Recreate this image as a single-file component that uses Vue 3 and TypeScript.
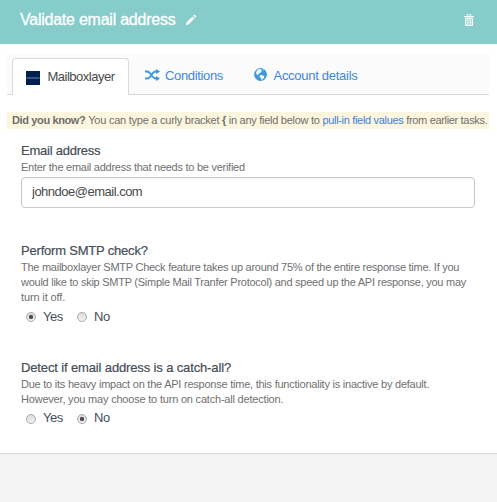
<script setup lang="ts">
import { ref } from 'vue'

interface Question {
  id: string
  label: string
  lines: { text: string; cls: string }[]
  answer: string
}

const email = ref('johndoe@email.com')
const options = ['Yes', 'No']
const questions = ref<Question[]>([
  {
    id: 'smtp',
    label: 'Perform SMTP check?',
    lines: [
      { text: 'The mailboxlayer SMTP Check feature takes up around 75% of the entire response time. If you', cls: 'normal' },
      { text: 'would like to skip SMTP (Simple Mail Tranfer Protocol) and speed up the API response, you may', cls: 'normal' },
      { text: 'turn it off.', cls: 'short' },
    ],
    answer: 'Yes',
  },
  {
    id: 'catchall',
    label: 'Detect if email address is a catch-all?',
    lines: [
      { text: 'Due to its heavy impact on the API response time, this functionality is inactive by default.', cls: 'medium' },
      { text: 'However, you may choose to turn on catch-all detection.', cls: 'loose' },
    ],
    answer: 'No',
  },
])
</script>

<template>
  <div class="panel">
    <header class="header">
      <h1 class="title">Validate email address</h1>
      <svg class="pencil" viewBox="0 0 12 12" width="12" height="12">
        <path d="M.8 11.200l.8-3L7.600 2.500l1.900 1.900L3.800 10.200zM8.300 1.800l.9-.9q.4-.4.8 0l1.100 1.100q.4.400 0 .8l-.9.900z" fill="#fff" />
      </svg>
      <svg class="trash" viewBox="0 0 10 12" width="10" height="12">
        <path d="M3.200 2V.6h3.600V2" fill="none" stroke="#fff" stroke-opacity=".8" />
        <path d="M0 2h10v1H0z" fill="#fff" />
        <path d="M1.500 4v7.500h7V4z" fill="#fff" fill-opacity=".35" stroke="#fff" />
        <path d="M3.500 4.500V11M5 4.500V11M6.500 4.500V11" stroke="#fff" stroke-opacity=".65" stroke-width=".7" />
      </svg>
    </header>

    <main class="body">
      <nav class="tabs">
        <a class="tab active">
          <span class="brand"><svg viewBox="0 0 14 14" width="14" height="14"><path d="M.5 7h13" stroke="#8492b3" stroke-width="1.200" stroke-dasharray="1.800 .2" /></svg></span>
          <span class="name mailbox">Mailboxlayer</span>
        </a>
        <a class="tab conditions">
          <svg class="icon" viewBox="0 0 15 12" width="15" height="12">
            <path d="M0 2.500h2.300C5.800 2.500 7 9.500 10.500 9.500H12M0 9.500h2.300C5.800 9.500 7 2.500 10.500 2.500H12" fill="none" stroke="#3b99e0" stroke-width="1.800" />
            <path d="M11 0l4 2.500L11 5zM11 7l4 2.500L11 12z" fill="#3b99e0" />
          </svg>
          <span class="name cond">Conditions</span>
        </a>
        <a class="tab account">
          <svg class="icon" viewBox="0 0 13 13" width="13" height="13">
            <circle cx="6.500" cy="6.500" r="6.400" fill="#3b99e0" />
            <path d="M3 2.200L5.200 1l2.300.3-.8 1.200 1.200.4-.8 1.500-1.500.4-.5 1.300-1.300.2.7 1.200-1.600-.7-.9-1.900zM8.500 1.200l1.300.6-.5.800-1-.3zM6 7.300l1.500-.3 2.900 1.300-.5 1.700-1.500 1.500-1.200.2-.2-1.700L5.600 9z" fill="#f5fafd" />
          </svg>
          <span class="name acct">Account details</span>
        </a>
      </nav>

      <p class="hint"><b>Did you know?</b> <span class="h1">You can type a curly bracket</span> <b class="brace">{</b> <span class="h2">in any field below to</span> <a>pull-in field values</a> <span class="h3">from earlier tasks.</span></p>

      <section class="field email">
        <label class="label" for="email">Email address</label>
        <p class="desc">Enter the email address that needs to be verified</p>
        <input id="email" v-model="email" class="input" type="text">
      </section>

      <section v-for="q in questions" :key="q.id" class="field" :class="q.id">
        <h2 class="label">{{ q.label }}</h2>
        <p v-for="line in q.lines" :key="line.text" class="desc" :class="line.cls">{{ line.text }}</p>
        <div class="options">
          <label v-for="o in options" :key="o" class="option">
            <input v-model="q.answer" class="radio" type="radio" :name="q.id" :value="o">
            <span>{{ o }}</span>
          </label>
        </div>
      </section>
    </main>
    <footer class="footer"></footer>
  </div>
</template>

<style>
body {
  background: #fff;
}
</style>

<style scoped>
.panel {
  display: flex;
  flex-direction: column;
  width: 497px;
  height: 502px;
  overflow: hidden;
  box-sizing: border-box;
  font-family: "Liberation Sans", Arial, sans-serif;
  color: #444b54;
}
h1, h2, p {
  margin: 0;
  font-weight: 400;
}
.header {
  display: flex;
  align-items: center;
  flex: none;
  height: 44px;
  padding: 0 23px 0 20px;
  box-sizing: border-box;
  background: #86cccb;
}
.title {
  font-size: 16px;
  line-height: 20px;
  letter-spacing: -0.24px;
  color: #fff;
  -webkit-text-stroke: 0.3px #fff;
  padding-bottom: 4px;
}
.pencil {
  margin: 0 0 4px 10px;
}
.trash {
  margin: 0 0 5px auto;
}
.body {
  flex: none;
  height: 409px;
  padding: 9px 8px 0 7px;
  box-sizing: border-box;
}
.tabs {
  display: flex;
  align-items: flex-end;
  height: 42px;
  padding-left: 5px;
  box-sizing: border-box;
  background: #fbfbfb;
  border-bottom: 1px solid #d9d9d9;
}
.tab {
  display: flex;
  align-items: center;
  height: 36px;
  box-sizing: border-box;
  font-size: 13px;
  color: #3f87dc;
}
.tab.active {
  width: 117px;
  height: 37px;
  margin-bottom: -1px;
  padding-left: 13px;
  border: 1px solid #d9d9d9;
  border-bottom: 0;
  border-radius: 4px 4px 0 0;
  background: #fff;
  color: #4a4a4a;
}
.name {
  line-height: 18px;
  white-space: nowrap;
}
.brand {
  display: flex;
  width: 14px;
  height: 14px;
  margin: 1px 7.500px 0 0;
  background: #001f4f;
}
.mailbox { letter-spacing: -0.498px; }
.cond { letter-spacing: -0.343px; }
.acct { letter-spacing: -0.278px; }
.conditions {
  margin-left: 16px;
}
.conditions .icon {
  margin: 0 5px 3px 0;
}
.account {
  margin-left: 30.500px;
}
.account .icon {
  margin: 0 7px 4px 0;
}
.hint {
  height: 17px;
  margin-top: 17px;
  padding-left: 5px;
  background: #fdf6de;
  font-size: 11px;
  line-height: 17px;
  letter-spacing: -0.255px;
  white-space: nowrap;
  color: #6f6f6f;
}
.hint b { letter-spacing: -0.37px; }
.hint .h1 { letter-spacing: -0.242px; }
.hint .h2 { letter-spacing: -0.277px; }
.hint .h3 { letter-spacing: -0.33px; }
.hint a {
  letter-spacing: -0.322px;
  color: #3b7fe0;
}
.field {
  padding: 0 14px;
}
.email {
  height: 100px;
  margin-top: 13px;
}
.smtp {
  height: 117px;
}
.label {
  display: block;
  font-size: 13px;
  line-height: 18px;
  letter-spacing: -0.24px;
  color: #454e58;
  -webkit-text-stroke: 0.2px #454e58;
}
.smtp .label { letter-spacing: -0.2px; }
.catchall .label { letter-spacing: -0.136px; }
.desc {
  font-size: 11px;
  line-height: 15px;
  letter-spacing: -0.262px;
  white-space: nowrap;
  color: #707070;
}
.desc.medium { letter-spacing: -0.235px; }
.desc.loose { letter-spacing: -0.2px; }
.desc.short { letter-spacing: -0.13px; }
.input {
  display: block;
  width: 454px;
  height: 31px;
  margin: 2px 0 0;
  padding: 0 10px 3px;
  box-sizing: border-box;
  border: 1px solid #c8c8c8;
  border-radius: 4px;
  background: #fff;
  box-shadow: inset 0 1px 1px rgba(0, 0, 0, 0.05);
  font: 13px "Liberation Sans", Arial, sans-serif;
  letter-spacing: -0.5px;
  color: #4a4a4a;
  outline: none;
}
.options {
  display: flex;
  padding: 3px 0 0 5px;
}
.catchall .options {
  padding-top: 2px;
}
.option {
  display: flex;
  width: 51px;
  font-size: 13px;
  line-height: 18px;
  letter-spacing: -0.5px;
  color: #454e58;
}
.radio {
  appearance: none;
  flex: none;
  width: 10px;
  height: 10px;
  margin: 4px 7px 0 0;
  box-sizing: border-box;
  border: 1px solid #a9a9a9;
  border-radius: 50%;
  background: linear-gradient(#dcdcdc, #f2f2f2);
}
.catchall .radio {
  margin-top: 5px;
}
.radio:checked {
  background: radial-gradient(circle, #505050 0 1.900px, transparent 2.500px), linear-gradient(#dcdcdc, #f2f2f2);
}
.footer {
  flex: 1;
  border-top: 1px solid #d9d9d9;
  background: #f3f3f3;
}
</style>
